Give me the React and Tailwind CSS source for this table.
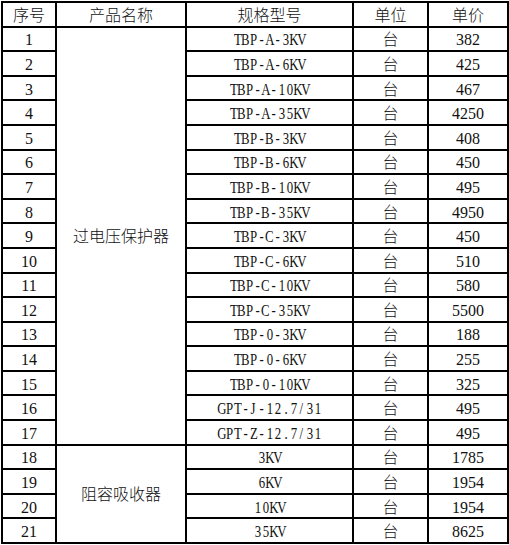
import React from "react";

const rows = [
  ["1", "TBP-A-3KV", "382"],
  ["2", "TBP-A-6KV", "425"],
  ["3", "TBP-A-10KV", "467"],
  ["4", "TBP-A-35KV", "4250"],
  ["5", "TBP-B-3KV", "408"],
  ["6", "TBP-B-6KV", "450"],
  ["7", "TBP-B-10KV", "495"],
  ["8", "TBP-B-35KV", "4950"],
  ["9", "TBP-C-3KV", "450"],
  ["10", "TBP-C-6KV", "510"],
  ["11", "TBP-C-10KV", "580"],
  ["12", "TBP-C-35KV", "5500"],
  ["13", "TBP-0-3KV", "188"],
  ["14", "TBP-0-6KV", "255"],
  ["15", "TBP-0-10KV", "325"],
  ["16", "GPT-J-12.7/31", "495"],
  ["17", "GPT-Z-12.7/31", "495"],
  ["18", "3KV", "1785"],
  ["19", "6KV", "1954"],
  ["20", "10KV", "1954"],
  ["21", "35KV", "8625"],
];

const cjk = "font-['Liberation_Serif','Noto_Sans_CJK_SC',serif]";

function Mono({ text }) {
  return (
    <span className="inline-flex">
      {text.split("").map((c, i) => (
        <span key={i} className="inline-flex w-[8px] justify-center">
          <span className="inline-block scale-x-[0.8]">{c}</span>
        </span>
      ))}
    </span>
  );
}

function Cell({ children, className = "" }) {
  return (
    <div
      className={`bg-white flex items-center justify-center pt-[3px] text-[16px] leading-none text-[#111] ${cjk} ${className}`}
    >
      {children}
    </div>
  );
}

export default function App() {
  const cells = [];
  ["序号", "产品名称", "规格型号", "单位", "单价"].forEach((h) =>
    cells.push(
      <Cell key={"h" + h} className="font-light">
        {h}
      </Cell>
    )
  );
  rows.forEach((r, i) => {
    cells.push(<Cell key={"n" + i}>{r[0]}</Cell>);
    if (i === 0)
      cells.push(
        <Cell key="m1" className="row-span-17 font-light">
          过电压保护器
        </Cell>
      );
    if (i === 17)
      cells.push(
        <Cell key="m2" className="row-span-4 font-light">
          阻容吸收器
        </Cell>
      );
    cells.push(
      <Cell key={"s" + i}>
        <Mono text={r[1]} />
      </Cell>
    );
    cells.push(
      <Cell key={"u" + i} className="font-light">
        台
      </Cell>
    );
    cells.push(<Cell key={"p" + i}>{r[2]}</Cell>);
  });

  return (
    <div className="w-[509px] h-[545px] bg-white pt-[1px] pl-[1px]">
      <div className="grid w-[508px] h-[543px] bg-black p-[2px] gap-[2px] grid-cols-[52px_128px_165px_73px_78px] grid-rows-[repeat(22,minmax(0,1fr))]">
        {cells}
      </div>
    </div>
  );
}
